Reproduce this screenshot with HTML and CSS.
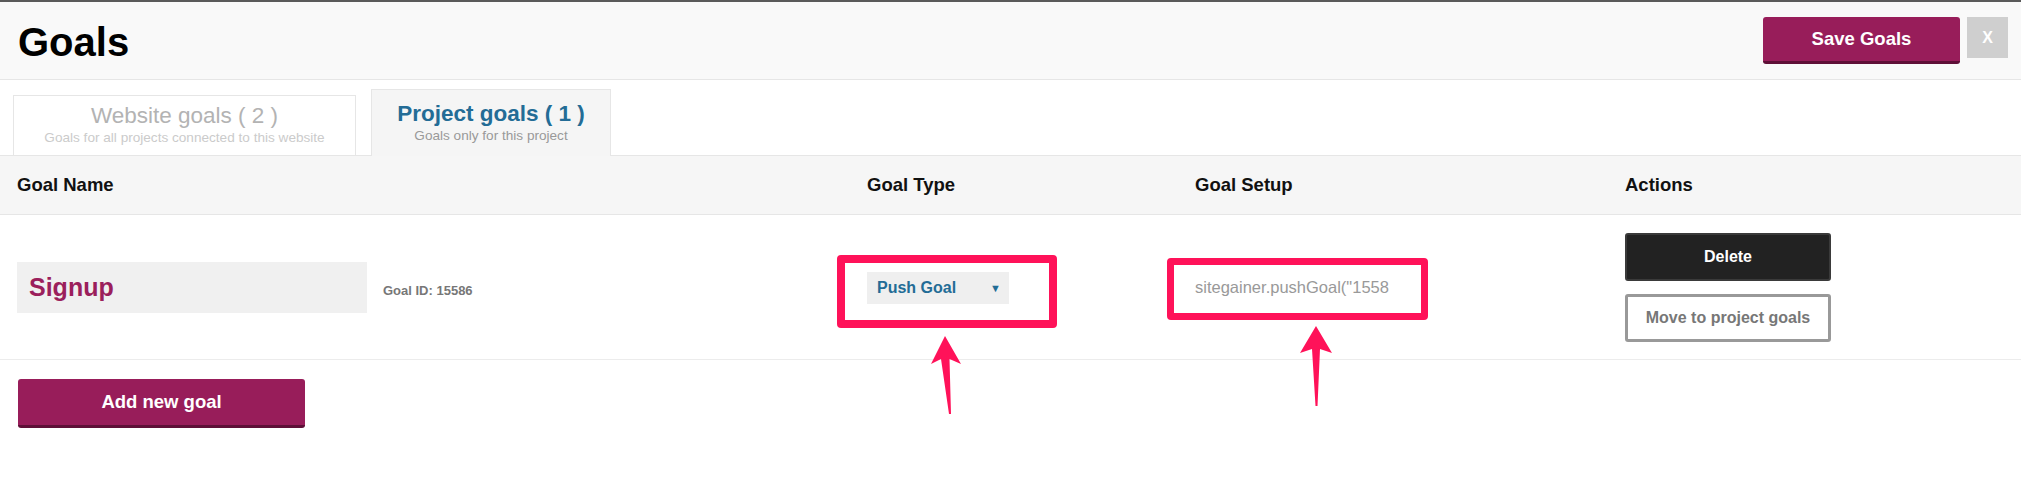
FILE: index.html
```html
<!DOCTYPE html>
<html lang="en">
<head>
  <meta charset="UTF-8" />
  <meta name="viewport" content="width=device-width, initial-scale=1.0"/>
  <title>Goals</title>
  <link rel="stylesheet" href="styles.css">
</head>
<body>
  <div class="page">
    <div class="topline"></div>
    <div class="header">
      <h1>Goals</h1>
      <div class="header-actions">
        <button class="btn-save">Save Goals</button>
        <button class="btn-close">X</button>
      </div>
    </div>

    <div class="tabs">
      <div class="tab">
        <div class="tab-title">Website goals ( 2 )</div>
        <div class="tab-sub">Goals for all projects connected to this website</div>
      </div>
      <div class="tab active">
        <div class="tab-title">Project goals ( 1 )</div>
        <div class="tab-sub">Goals only for this project</div>
      </div>
    </div>

    <div class="goals-head">
      <div>Goal Name</div>
      <div>Goal Type</div>
      <div>Goal Setup</div>
      <div>Actions</div>
    </div>

    <div class="goal-row">
      <div class="cell-name">
        <div class="name-input">Signup</div>
        <span class="goal-id">Goal ID: 15586</span>
      </div>
      <div class="cell-type">
        <div class="type-select">
          <span>Push Goal</span>
          <span class="caret">&#9660;</span>
          <div class="mark mark-type"></div>
        </div>
      </div>
      <div class="cell-setup">
        <div class="setup-input">
          <span>sitegainer.pushGoal("1558</span>
          <div class="mark mark-setup"></div>
        </div>
      </div>
      <div class="cell-actions">
        <button class="btn-delete">Delete</button>
        <button class="btn-move">Move to project goals</button>
      </div>
    </div>

    <button class="btn-add">Add new goal</button>

    <!-- annotation arrows -->
    <svg class="arrow arrow-type" width="36" height="82" viewBox="0 0 36 82">
      <polygon points="17,1 33,29 21.5,24 23,79 21,79 13,24 3,29" fill="#ff1259"/>
    </svg>
    <svg class="arrow arrow-setup" width="36" height="84" viewBox="0 0 36 84">
      <polygon points="18,2 34,29 22,25 19.5,82 17.5,82 14,25 2,29" fill="#ff1259"/>
    </svg>
  </div>
</body>
</html>
```

FILE: styles.css
```css
body {
  margin: 0;
  font-family: "Liberation Sans", Arial, sans-serif;
  background-color: white;
  color: #111;
}

button {
  font-family: "Liberation Sans", Arial, sans-serif;
  cursor: pointer;
}

.page {
  position: relative;
  min-height: 485px;
}

.topline {
  height: 2px;
  background-color: #5a5a5a;
}

.header {
  display: flex;
  justify-content: space-between;
  align-items: flex-start;
  height: 62px;
  padding: 15px 13px 0 18px;
  background-color: #f9f9f9;
  border-bottom: 1px solid #e6e6e6;
}

h1 {
  margin: 3px 0 0;
  font-size: 40px;
  line-height: 44px;
  font-weight: bold;
  color: #000;
}

.header-actions {
  display: flex;
  align-items: flex-start;
  gap: 7px;
}

.btn-save {
  width: 197px;
  height: 47px;
  background-color: #981d5a;
  color: white;
  font-size: 18.5px;
  font-weight: bold;
  border: none;
  border-bottom: 3px solid #5e0f37;
  border-radius: 3px;
}

.btn-close {
  width: 41px;
  height: 41px;
  background-color: #cfcfcf;
  color: white;
  font-size: 16px;
  font-weight: bold;
  border: none;
  padding: 0;
}

.tabs {
  display: flex;
  align-items: flex-end;
  gap: 15px;
  padding: 9px 0 0 13px;
  border-bottom: 1px solid #e6e6e6;
}

.tab {
  width: 341px;
  margin-bottom: -1px;
  padding: 8px 0 9px;
  border: 1px solid #e6e6e6;
  background-color: white;
  text-align: center;
}

.tab.active {
  width: 238px;
  padding: 12px 0 12px;
  border-bottom: none;
  background-color: #f5f5f5;
}

.tab-title {
  font-size: 22.5px;
  line-height: 24px;
  color: #b3b3b3;
}

.tab.active .tab-title {
  font-weight: bold;
  color: #236c96;
}

.tab-sub {
  margin-top: 2px;
  font-size: 13.6px;
  line-height: 16px;
  color: #cbcbcb;
}

.tab.active .tab-sub {
  color: #999;
}

.goals-head,
.goal-row {
  display: grid;
  grid-template-columns: 850px 328px 430px 1fr;
  padding: 0 17px;
}

.goals-head {
  height: 58px;
  align-items: center;
  background-color: #f6f6f6;
  border-bottom: 1px solid #e6e6e6;
  font-size: 18.5px;
  font-weight: bold;
  color: #111;
}

.goal-row {
  align-items: center;
  padding-top: 18px;
  padding-bottom: 17px;
  border-bottom: 1px solid #ececec;
}

.cell-name {
  display: flex;
  align-items: center;
  gap: 16px;
}

.name-input {
  width: 338px;
  height: 51px;
  padding-left: 12px;
  display: flex;
  align-items: center;
  background-color: #f0f0f0;
  font-size: 25px;
  font-weight: bold;
  color: #9b1f5c;
}

.goal-id {
  margin-top: 5px;
  font-size: 13px;
  font-weight: bold;
  color: #777;
}

.type-select {
  position: relative;
  width: 132px;
  height: 32px;
  padding-left: 10px;
  display: flex;
  align-items: center;
  justify-content: space-between;
  background-color: #efefef;
  font-size: 16px;
  font-weight: bold;
  color: #236c96;
}

.caret {
  margin-right: 8px;
  font-size: 11px;
}

.setup-input {
  position: relative;
  width: 205px;
  height: 32px;
  display: flex;
  align-items: center;
  white-space: nowrap;
  font-size: 16.5px;
  color: #999;
}

.mark {
  position: absolute;
  border: 8px solid #ff1259;
  border-radius: 4px;
  box-sizing: border-box;
}

.mark-type {
  left: -30px;
  top: -17px;
  width: 220px;
  height: 73px;
}

.mark-setup {
  left: -28px;
  top: -14px;
  width: 261px;
  height: 62px;
  border-width: 7px;
}

.cell-actions {
  display: flex;
  flex-direction: column;
  gap: 13px;
}

.cell-actions button {
  width: 206px;
  height: 48px;
  font-size: 16px;
  font-weight: bold;
  border-radius: 3px;
}

.btn-delete {
  background-color: #222;
  color: white;
  border: 2px solid #3a3a3a;
}

.btn-move {
  background-color: white;
  color: #777;
  border: 3px solid #999;
}

.btn-add {
  display: block;
  margin: 19px 0 0 18px;
  width: 287px;
  height: 49px;
  background-color: #981d5a;
  color: white;
  font-size: 18.5px;
  font-weight: bold;
  border: none;
  border-bottom: 3px solid #5e0f37;
  border-radius: 3px;
}

.arrow {
  position: absolute;
}

.arrow-type {
  left: 928px;
  top: 335px;
}

.arrow-setup {
  left: 1298px;
  top: 324px;
}
```
